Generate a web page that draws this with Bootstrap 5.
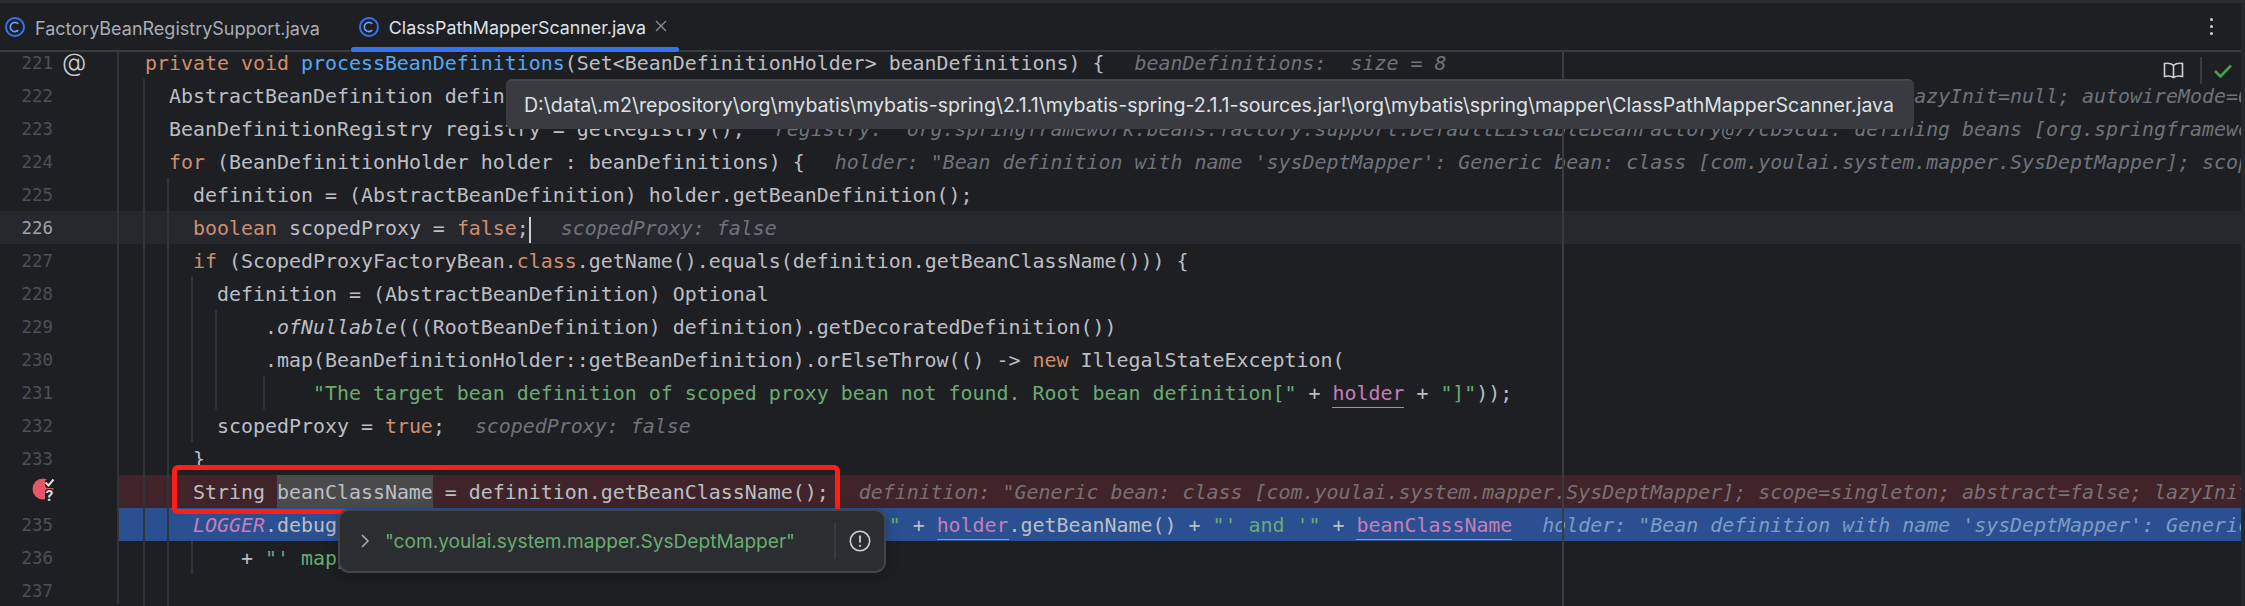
<!DOCTYPE html>
<html lang="en">
<head>
<meta charset="utf-8">
<title>ClassPathMapperScanner.java</title>
<link href="https://cdn.jsdelivr.net/npm/bootstrap@5.3.0/dist/css/bootstrap.min.css" rel="stylesheet">
<style>
html,body{margin:0;height:606px;overflow:hidden;background:#1e1f22}
.ide{position:relative;width:2245px;height:606px;overflow:hidden;background:#26282b}
.topstrip{height:3px;background:#2b2d30}
.pane{width:2241px;height:603px;background:#1e1f22}
.tabbar{height:49px;border-bottom:2px solid #393b40;font-family:Inter,sans-serif;font-size:18px;color:#a8adb5}
.ftab{position:relative;height:47px;gap:10px}
.ftab.one{padding:0 31px 0 5px}
.ftab.two{padding:0 12px 0 8px;color:#dfe1e5;font-size:17.85px}
.ftab.two::after{content:"";position:absolute;left:0;right:0;bottom:-2px;height:5px;background:#3574f0;border-radius:3px}
.ftab span{position:relative;top:2px}
.closex{margin-left:-1px;position:relative;top:-1px}
.moredots{width:4px;margin-right:27px;gap:4px}
.moredots i{display:block;width:3px;height:3px;border-radius:50%;background:#ced0d6}
.editor{height:552px;overflow:hidden}
.lines{margin-top:-6px}
.lrow{height:33px;font-family:"DejaVu Sans Mono",monospace;font-size:19.93px;line-height:33px;color:#bcbec4;white-space:pre}
.gut{position:relative;flex:0 0 119px;width:119px;border-right:2px solid #313438;font-size:17.4px;color:#4b5059}
.gut .num{display:block;width:53px;text-align:right;position:relative;top:1px}
.src{flex:1 1 auto;min-width:0;overflow:hidden;padding-left:26px;position:relative}
.txt{display:block;position:relative;top:1px}
.active-line{background:#26282e}
.active-line .gut .num{color:#a1a3ab}
.bp-line .src{background:#402429}
.exec-line .src{background:#2a5091}
.kw{color:#cf8e6d}.fn{color:#56a8f5}.st{color:#6aab73}.fd{color:#c77dbb}.it{font-style:italic}
.ul{border-bottom:1px solid currentColor;display:inline-block;line-height:27px;height:28px}
.hint{margin-left:30px;font-style:italic;color:#6f737a}
.bp-line .hint{color:#7b7074}
.exec-line .hint{color:#7d9cc6}
.sel{background:#4b4a4a;display:inline-block;height:33px;margin-top:-1px;padding-top:0;line-height:35px;vertical-align:top}
.caret-bar{display:inline-block;width:2px;height:26px;background:#ced0d6;vertical-align:middle}
.at-mark{position:absolute;left:62px;top:0;font-family:Inter,sans-serif;font-size:25px;font-weight:300;color:#ced0d6}
.bp-ico{position:absolute;left:30px;top:1px}
.vline{position:absolute;width:2px;background:#313438}
.v1{left:143px;top:79px;height:527px}
.v2{left:167px;top:178px;height:428px}
.v3{left:191px;top:277px;height:165px}
.v4{left:191px;top:541px;height:33px}
.v5{left:215px;top:310px;height:99px}
.v6{left:263px;top:376px;height:33px}
.vm{left:1562px;top:52px;height:554px;background:#393b40}
.rtools{position:absolute;left:2163px;top:57px;gap:0}
.rsep{width:2px;height:27px;background:#393b40;margin:0 12px 0 16px}
.pathtip{position:absolute;left:506px;top:79px;width:1408px;height:50px;background:#393b40;border-top:2px solid #43454a;border-radius:6px;padding-left:18px;font-family:Inter,sans-serif;font-size:19.56px;line-height:48px;color:#dfe1e5;white-space:nowrap}
.redbox{position:absolute;left:172px;top:465px;width:668px;height:49px;border:5px solid #ff1f17;border-radius:6px}
.valpop{position:absolute;left:338px;top:509px;width:548px;height:64px;background:#2b2d30;border:2px solid #43454a;border-radius:11px;font-family:Inter,sans-serif;font-size:19.1px;color:#6aab73;box-shadow:0 4px 14px rgba(0,0,0,.25);padding-left:20px}
.valpop .vtext{margin-left:15px;width:449px}
.valsep{width:2px;height:36px;background:#393b40;margin-right:13px}
</style>
</head>
<body>
<div class="ide">
  <div class="topstrip"></div>
  <div class="pane">
    <div class="tabbar d-flex align-items-center">
      <div class="ftab one d-flex align-items-center">
        <svg width="20" height="20" viewBox="0 0 20 20"><circle cx="10" cy="10" r="9" fill="none" stroke="#3574f0" stroke-width="2"/><path d="M13.2 6.8A4.6 4.6 0 1 0 13.2 13.2" fill="none" stroke="#6f9ff5" stroke-width="1.7"/></svg>
        <span>FactoryBeanRegistrySupport.java</span>
      </div>
      <div class="ftab two d-flex align-items-center">
        <svg width="20" height="20" viewBox="0 0 20 20"><circle cx="10" cy="10" r="9" fill="none" stroke="#3574f0" stroke-width="2"/><path d="M13.2 6.8A4.6 4.6 0 1 0 13.2 13.2" fill="none" stroke="#6f9ff5" stroke-width="1.7"/></svg>
        <span>ClassPathMapperScanner.java</span>
        <svg class="closex" width="12" height="12" viewBox="0 0 12 12"><path d="M1 1l10 10M11 1L1 11" stroke="#8c8f95" stroke-width="1.3"/></svg>
      </div>
      <div class="moredots d-flex flex-column ms-auto"><i></i><i></i><i></i></div>
    </div>
    <div class="editor">
      <div class="lines">
        <div class="lrow d-flex"><div class="gut"><span class="num">221</span><span class="at-mark">@</span></div><div class="src"><span class="txt"><span class="kw">private void </span><span class="fn">processBeanDefinitions</span>(Set&lt;BeanDefinitionHolder&gt; beanDefinitions) {<span class="hint">beanDefinitions:  size = 8</span></span></div></div>
        <div class="lrow d-flex"><div class="gut"><span class="num">222</span></div><div class="src"><span class="txt">  AbstractBeanDefinition definition;<span class="hint">definition: "Generic bean: class [com.youlai.system.mapper.SysDeptMapper]; scope=singleton; abstract=false; lazyInit=null; autowireMode=0; dependencyCheck=0</span></span></div></div>
        <div class="lrow d-flex"><div class="gut"><span class="num">223</span></div><div class="src"><span class="txt">  BeanDefinitionRegistry registry = getRegistry();<span class="hint">registry:  org.springframework.beans.factory.support.DefaultListableBeanFactory@77cb9cd1: defining beans [org.springframework.context</span></span></div></div>
        <div class="lrow d-flex"><div class="gut"><span class="num">224</span></div><div class="src"><span class="txt">  <span class="kw">for</span> (BeanDefinitionHolder holder : beanDefinitions) {<span class="hint">holder: "Bean definition with name 'sysDeptMapper': Generic bean: class [com.youlai.system.mapper.SysDeptMapper]; scope=singleton</span></span></div></div>
        <div class="lrow d-flex"><div class="gut"><span class="num">225</span></div><div class="src"><span class="txt">    definition = (AbstractBeanDefinition) holder.getBeanDefinition();</span></div></div>
        <div class="lrow d-flex active-line"><div class="gut"><span class="num">226</span></div><div class="src"><span class="txt">    <span class="kw">boolean</span> scopedProxy = <span class="kw">false</span>;<span class="caret-bar"></span><span class="hint">scopedProxy: false</span></span></div></div>
        <div class="lrow d-flex"><div class="gut"><span class="num">227</span></div><div class="src"><span class="txt">    <span class="kw">if</span> (ScopedProxyFactoryBean.<span class="kw">class</span>.getName().equals(definition.getBeanClassName())) {</span></div></div>
        <div class="lrow d-flex"><div class="gut"><span class="num">228</span></div><div class="src"><span class="txt">      definition = (AbstractBeanDefinition) Optional</span></div></div>
        <div class="lrow d-flex"><div class="gut"><span class="num">229</span></div><div class="src"><span class="txt">          .<span class="it">ofNullable</span>(((RootBeanDefinition) definition).getDecoratedDefinition())</span></div></div>
        <div class="lrow d-flex"><div class="gut"><span class="num">230</span></div><div class="src"><span class="txt">          .map(BeanDefinitionHolder::getBeanDefinition).orElseThrow(() -&gt; <span class="kw">new</span> IllegalStateException(</span></div></div>
        <div class="lrow d-flex"><div class="gut"><span class="num">231</span></div><div class="src"><span class="txt">              <span class="st">"The target bean definition of scoped proxy bean not found. Root bean definition["</span> + <span class="fd ul">holder</span> + <span class="st">"]"</span>));</span></div></div>
        <div class="lrow d-flex"><div class="gut"><span class="num">232</span></div><div class="src"><span class="txt">      scopedProxy = <span class="kw">true</span>;<span class="hint">scopedProxy: false</span></span></div></div>
        <div class="lrow d-flex"><div class="gut"><span class="num">233</span></div><div class="src"><span class="txt">    }</span></div></div>
        <div class="lrow d-flex bp-line"><div class="gut"><span class="num"></span><svg class="bp-ico" width="26" height="26" viewBox="0 0 26 26"><circle cx="13" cy="13" r="10.5" fill="#e55765"/><rect x="15" y="3" width="11" height="9" fill="#1e1f22" rx="3"/><rect x="15" y="13" width="9" height="13" fill="#1e1f22" rx="3"/><path d="M15.5 6.5l3 3 5-6" fill="none" stroke="#dfe1e5" stroke-width="2"/><text x="15.5" y="24.5" font-family="Inter,sans-serif" font-size="14" font-weight="700" fill="#dfe1e5">?</text></svg></div><div class="src"><span class="txt">    String <span class="sel">beanClassName</span> = definition.getBeanClassName();<span class="hint">definition: "Generic bean: class [com.youlai.system.mapper.SysDeptMapper]; scope=singleton; abstract=false; lazyInit=null; autowireMode</span></span></div></div>
        <div class="lrow d-flex exec-line"><div class="gut"><span class="num">235</span></div><div class="src"><span class="txt">    <span class="fd it">LOGGER</span>.debug(() -&gt; <span class="st">"Creating MapperFactoryBean with name '"</span> + <span class="fd ul">holder</span>.getBeanName() + <span class="st">"' and '"</span> + <span class="fd ul">beanClassName</span><span class="hint">holder: "Bean definition with name 'sysDeptMapper': Generic bean: class [com.youlai.system.mapper.SysDeptMapper]</span></span></div></div>
        <div class="lrow d-flex"><div class="gut"><span class="num">236</span></div><div class="src"><span class="txt">        + <span class="st">"' mapperInterface"</span>);</span></div></div>
        <div class="lrow d-flex"><div class="gut"><span class="num">237</span></div><div class="src"></div></div>
      </div>
    </div>
  </div>

  <div class="vline v1"></div><div class="vline v2"></div><div class="vline v3"></div><div class="vline v4"></div><div class="vline v5"></div><div class="vline v6"></div><div class="vline vm"></div>

  <div class="rtools d-flex align-items-center">
    <svg width="21" height="17" viewBox="0 0 21 17"><path d="M10.5 3.5C8.5 1.5 5 1 1.5 1.5V14.5C5 13.5 8 14 10.5 15.5 13 14 16 13.5 19.5 14.5V1.5C16 1 12.5 1.5 10.5 3.5ZM10.5 3.5V15.5" fill="none" stroke="#ced0d6" stroke-width="1.6"/></svg>
    <div class="rsep"></div>
    <svg width="18" height="14" viewBox="0 0 18 14"><path d="M1 7l5.5 5.5L17 1.5" fill="none" stroke="#499c54" stroke-width="2.6"/></svg>
  </div>

  <div class="pathtip">D:\data\.m2\repository\org\mybatis\mybatis-spring\2.1.1\mybatis-spring-2.1.1-sources.jar!\org\mybatis\spring\mapper\ClassPathMapperScanner.java</div>

  <div class="redbox"></div>

  <div class="valpop d-flex align-items-center">
    <svg width="10" height="14" viewBox="0 0 10 14"><path d="M2 1l6 6-6 6" fill="none" stroke="#a8adb5" stroke-width="1.5"/></svg>
    <div class="vtext">"com.youlai.system.mapper.SysDeptMapper"</div>
    <div class="valsep"></div>
    <svg width="22" height="22" viewBox="0 0 22 22"><circle cx="11" cy="11" r="9.7" fill="none" stroke="#ced0d6" stroke-width="1.6"/><path d="M11 5.5v7" stroke="#ced0d6" stroke-width="1.8"/><circle cx="11" cy="15.8" r="1.1" fill="#ced0d6"/></svg>
  </div>
</div>
<script src="https://cdn.jsdelivr.net/npm/bootstrap@5.3.0/dist/js/bootstrap.bundle.min.js"></script>
</body>
</html>
